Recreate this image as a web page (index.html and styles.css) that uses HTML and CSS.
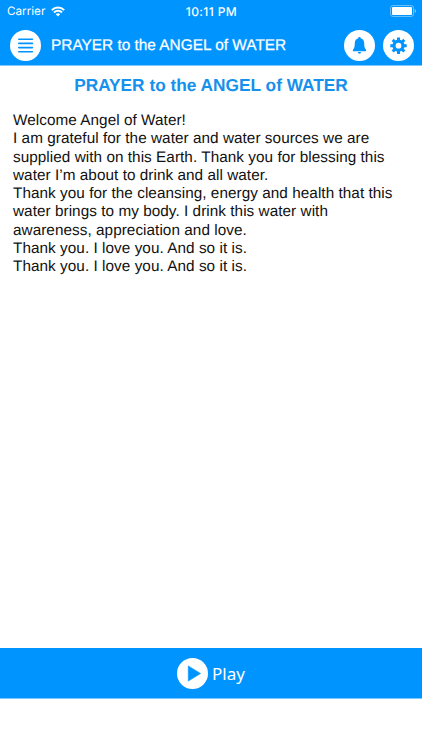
FILE: index.html
```html
<!DOCTYPE html>
<html lang="en">
<head>
    <meta charset="UTF-8">
    <meta name="viewport" content="width=device-width, initial-scale=1.0">
    <title>PRAYER to the ANGEL of WATER</title>
    <link rel="stylesheet" href="styles.css">
</head>
<body>
    <header>
        <div class="status-bar">
            <div class="carrier">
                <span>Carrier</span>
                <svg width="14" height="11" viewBox="0 0 14 11" fill="none" stroke="#fff" stroke-width="2">
                    <path d="M.8 4.1a8.800 8.800 0 0 1 12.400 0M3 6.500a5.700 5.700 0 0 1 8 0"/>
                    <path d="M4.800 8.300a3.200 3.200 0 0 1 4.400 0L7 10.600z" fill="#fff" stroke="none"/>
                </svg>
            </div>
            <div class="time">10:11 PM</div>
            <svg class="battery" width="26" height="12" viewBox="0 0 26 12">
                <rect x=".5" y=".5" width="23" height="11" rx="2.5" fill="none" stroke="#fff" stroke-opacity=".4"/>
                <rect x="2" y="2" width="20" height="8" rx="1" fill="#fff"/>
                <path d="M24.700 4v4q1.300-.7 1.300-2t-1.300-2z" fill="#fff" fill-opacity=".5"/>
            </svg>
        </div>
        <nav>
            <button class="round" aria-label="Menu">
                <svg width="31" height="31" viewBox="0 0 31 31" stroke="#0094ff" stroke-width="1.6" stroke-linecap="round">
                    <path d="M8.800 9.200h13.600M8.800 13.400h13.600M8.800 17.600h13.600M8.800 21.800h13.600"/>
                </svg>
            </button>
            <div class="nav-title">PRAYER to the ANGEL of WATER</div>
            <button class="round" aria-label="Reminders">
                <svg width="31" height="31" viewBox="0 0 31 31" fill="#0094ff">
                    <path d="M15.500 7c.8 0 1.200.5 1.200 1.300 2.300.6 3.500 2.500 3.500 4.900 0 3.900.7 5.300 1.900 6.600v1.400H8.900v-1.400c1.200-1.300 1.900-2.700 1.900-6.600 0-2.400 1.200-4.300 3.500-4.900 0-.8.4-1.300 1.200-1.300z"/>
                    <path d="M13.800 22h3.400q-.3 1.700-1.700 1.700t-1.700-1.700z"/>
                </svg>
            </button>
            <button class="round" aria-label="Settings">
                <svg width="31" height="31" viewBox="0 0 31 31">
                    <circle cx="15.500" cy="15.700" r="4.500" fill="none" stroke="#0094ff" stroke-width="3.200"/>
                    <path d="M15.500 7.500v3M15.500 20.900v3M7.300 15.700h3M20.700 15.700h3M9.700 9.900l2.100 2.100M19.200 19.400l2.100 2.100M9.700 21.500l2.100-2.100M19.200 12l2.100-2.100" stroke="#0094ff" stroke-width="3"/>
                </svg>
            </button>
        </nav>
    </header>
    <main>
        <h1>PRAYER to the ANGEL of WATER</h1>
        <p>
            Welcome Angel of Water!<br>
            I am grateful for the water and water sources we are<br>
            supplied with on this Earth. Thank you for blessing this<br>
            water I’m about to drink and all water.<br>
            Thank you for the cleansing, energy and health that this<br>
            water brings to my body. I drink this water with<br>
            awareness, appreciation and love.<br>
            Thank you. I love you. And so it is.<br>
            Thank you. I love you. And so it is.
        </p>
    </main>
    <footer>
        <button class="play">
            <svg width="31" height="31" viewBox="0 0 31 31">
                <circle cx="15.500" cy="15.500" r="15.500" fill="#fff"/>
                <path d="M11.300 7.900v15.200l12.200-7.600z" fill="#0094ff" stroke="#0094ff" stroke-width=".6" stroke-linejoin="round"/>
            </svg>
            <span>Play</span>
        </button>
    </footer>
</body>
</html>
```
FILE: styles.css
```css
* {
    box-sizing: border-box;
}
body {
    display: flex;
    flex-direction: column;
    height: 750px;
    margin: 0;
    padding-bottom: 51px;
    background-color: #fff;
    font-family: "Liberation Sans", Arial, sans-serif;
    text-rendering: geometricPrecision;
    overflow: hidden;
}
header {
    height: 66px;
    background-color: #0094ff;
    border-bottom: 1px solid #7cc8ff;
    color: #fff;
}
.status-bar {
    display: grid;
    grid-template-columns: 1fr auto 1fr;
    align-items: center;
    height: 22px;
    padding: 0 6px 0 7px;
    font-family: Inter, sans-serif;
    font-size: 12px;
}
.carrier {
    display: flex;
    align-items: center;
    gap: 6px;
    font-size: 11.7px;
}
.time {
    font-weight: 500;
    letter-spacing: 0.4px;
}
.battery {
    justify-self: end;
}
nav {
    display: flex;
    align-items: center;
    height: 46px;
    padding: 0 8px 0 10px;
}
button {
    padding: 0;
    border: none;
    background: none;
    color: inherit;
    cursor: pointer;
}
svg {
    display: block;
}
.round {
    width: 31px;
    height: 31px;
    border-radius: 50%;
    background-color: #fff;
}
.round + .round {
    margin-left: 8px;
}
.nav-title {
    flex: 1;
    margin-left: 10px;
    padding-top: 2px;
    font-size: 15.4px;
    white-space: nowrap;
    -webkit-text-stroke: 0.25px #fff;
}
main {
    flex: 1;
    padding: 9px 13px 0;
}
h1 {
    margin: 0;
    color: #1590ec;
    font-size: 17.3px;
    line-height: 20px;
    text-align: center;
}
p {
    margin: 17px 0 0;
    color: #111;
    font-size: 15.3px;
    line-height: 18.25px;
    letter-spacing: 0.05px;
    white-space: nowrap;
}
footer {
    display: flex;
    align-items: center;
    justify-content: center;
    height: 51px;
    background-color: #0094ff;
    border-bottom: 1px solid #7cc8ff;
    color: #fff;
}
.play {
    display: flex;
    align-items: center;
    gap: 4px;
    font-family: "Noto Sans", sans-serif;
    font-size: 17px;
}
```
